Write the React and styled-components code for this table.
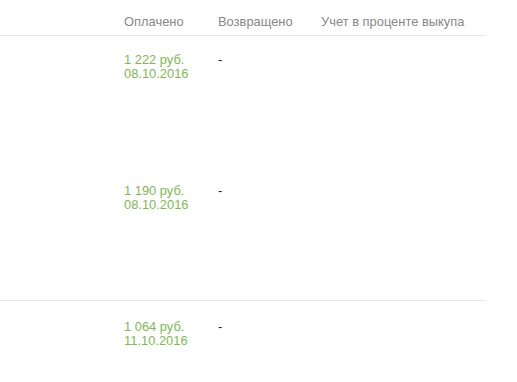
import React from "react";
import styled, { createGlobalStyle } from "styled-components";

const Global = createGlobalStyle`
  body {
    margin: 0;
    background: #fff;
    font-family: "Liberation Sans", Arial, sans-serif;
  }
`;

const Table = styled.div`
  width: 486px;
`;

const Head = styled.div`
  display: grid;
  grid-template-columns: 124px 94px 103px 1fr;
  height: 36px;
  align-items: center;
  border-bottom: 1px solid #e6e6e6;
  font-size: 12.9px;
  color: #888;
  padding-top: 7px;
  box-sizing: border-box;
`;

const Row = styled.div`
  display: grid;
  grid-template-columns: 124px 94px 103px 1fr;
  height: ${(p) => p.$h}px;
  padding-top: ${(p) => p.$pt}px;
  box-sizing: border-box;
  border-bottom: ${(p) => (p.$line ? "1px solid #e6e6e6" : "none")};
  font-size: 12.9px;
  line-height: 14px;
`;

const Paid = styled.div`
  color: #7cbb52;
`;

const Dash = styled.div`
  color: #222;
`;

const rows = [
  { sum: "1 222 руб.", date: "08.10.2016", h: 130, pt: 17, line: false },
  { sum: "1 190 руб.", date: "08.10.2016", h: 135, pt: 18, line: true },
  { sum: "1 064 руб.", date: "11.10.2016", h: 80, pt: 19, line: false },
];

export default function App() {
  return (
    <>
      <Global />
      <Table>
        <Head>
          <span />
          <span>Оплачено</span>
          <span>Возвращено</span>
          <span>Учет в проценте выкупа</span>
        </Head>
        {rows.map((r, i) => (
          <Row key={i} $h={r.h} $pt={r.pt} $line={r.line}>
            <span />
            <Paid>
              {r.sum}
              <br />
              {r.date}
            </Paid>
            <Dash>-</Dash>
            <span />
          </Row>
        ))}
      </Table>
    </>
  );
}
